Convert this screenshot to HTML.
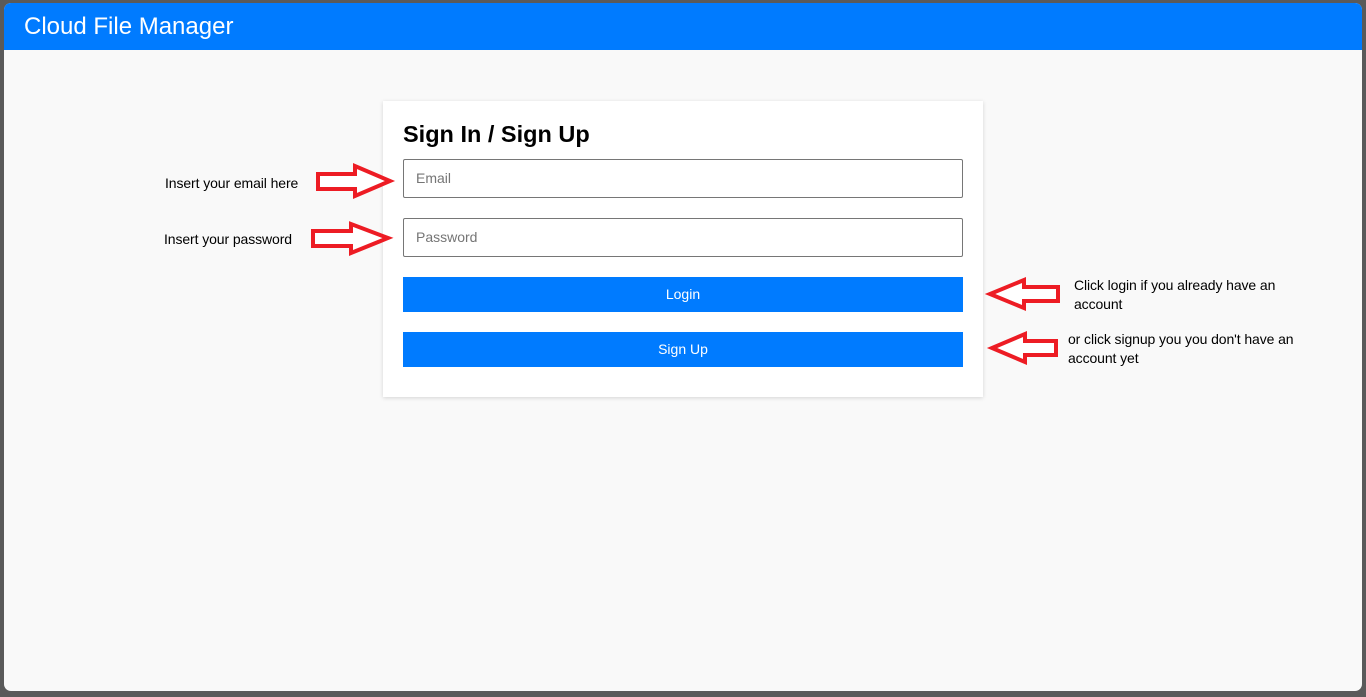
<html><head><style>
body{margin:0;width:1366px;height:697px;background:#5a5a5a;overflow:hidden;font-family:"Liberation Sans",sans-serif;position:relative}
.win{position:absolute;left:4px;top:3px;width:1358px;height:688px;background:#f9f9f9;border-radius:7px;overflow:hidden}
.hdr{height:47px;background:#007bff;color:#fff;font-size:24px;line-height:47px;padding-left:20px}
.card{position:absolute;left:379px;top:98px;width:600px;height:296px;background:#fff;box-shadow:0 1px 4px rgba(0,0,0,.15)}
h2{position:absolute;left:20px;top:20px;margin:0;font-size:23.5px;font-weight:bold}
.in{position:absolute;left:20px;border:1px solid #767676;border-radius:2px;font-size:14px;color:#757575;line-height:37px;padding-left:12px;box-sizing:border-box;width:560px;height:39px}
.btn{position:absolute;left:20px;width:560px;height:35px;background:#007bff;color:#fff;font-size:14px;text-align:center;line-height:35px}
.t{position:absolute;font-size:14px;color:#000;line-height:19px;letter-spacing:-0.1px}
svg{position:absolute;left:0;top:0}
</style></head><body>
<div class="win">
<div class="hdr">Cloud File Manager</div>
<div class="card">
<h2>Sign In / Sign Up</h2>
<div class="in" style="top:58px">Email</div>
<div class="in" style="top:117px">Password</div>
<div class="btn" style="top:176px">Login</div>
<div class="btn" style="top:231px">Sign Up</div>
</div>
</div>
<div class="t" style="left:165px;top:174px">Insert your email here</div>
<div class="t" style="left:164px;top:230px">Insert your password</div>
<div class="t" style="left:1074px;top:276px">Click login if you already have an<br>account</div>
<div class="t" style="left:1068px;top:330px">or click signup you you don't have an<br>account yet</div>
<svg width="1366" height="697" fill="#fff" stroke="#ed1c24" stroke-width="4">
<path d="M318 174H355V166L390 181L355 196V189H318Z"/>
<path d="M313 231H351V224L388 238L351 253V246H313Z"/>
<path d="M1058 287H1024V280L990 294L1024 308V301H1058Z"/>
<path d="M1056 341H1025V334L992 348L1025 362V355H1056Z"/>
</svg>
</body></html>
